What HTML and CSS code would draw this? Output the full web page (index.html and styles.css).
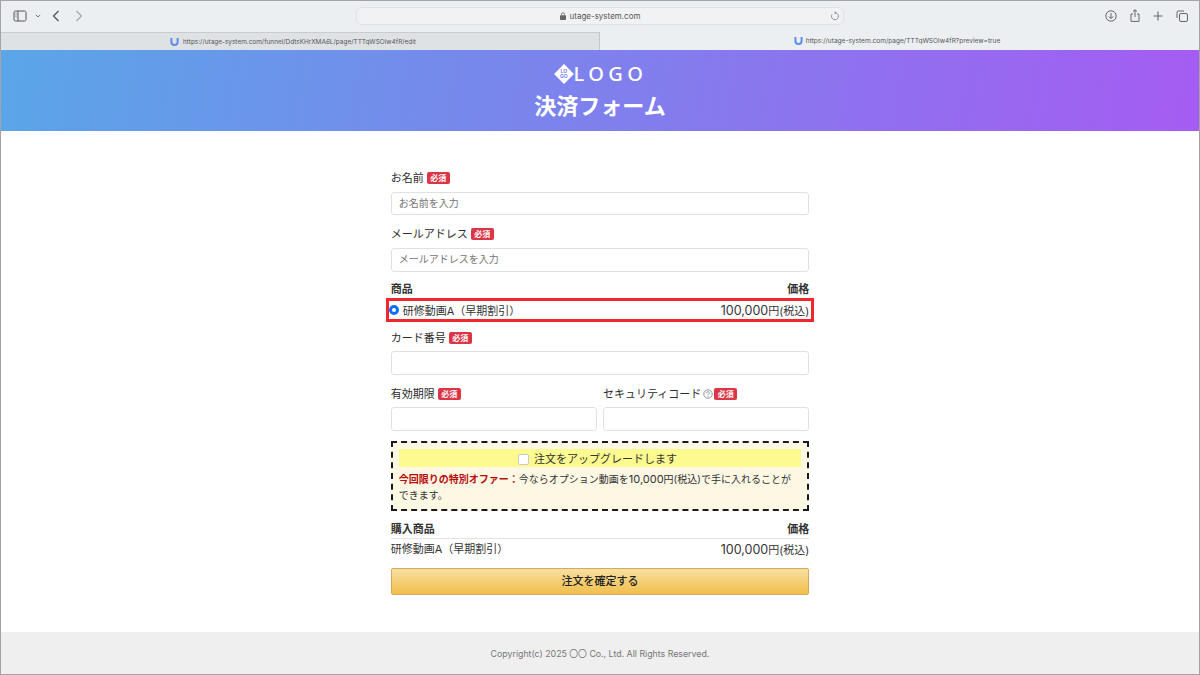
FILE: index.html
```html
<!DOCTYPE html>
<html lang="ja">
<head>
<meta charset="utf-8">
<title>決済フォーム</title>
<link rel="stylesheet" href="styles.css">
</head>
<body>
<div class="window">
  <div class="toolbar">
    <div class="tb-left">
      <svg class="ic sidebar" viewBox="0 0 14 12" width="14" height="12"><rect x="1" y="1" width="12" height="10" rx="1.5" fill="none" stroke="#555" stroke-width="1"/><path d="M5 1v10" stroke="#555"/><path d="M2.3 3.2h1.5M2.3 5h1.5M2.3 6.8h1.5" stroke="#777" stroke-width=".8"/></svg>
      <svg class="ic chev" viewBox="0 0 6 4" width="6" height="4"><path d="M.8.8 3 3l2.2-2.2" fill="none" stroke="#777" stroke-width="1"/></svg>
      <svg class="ic back" viewBox="0 0 8 12" width="8" height="12"><path d="M6.5 1 1.5 6l5 5" fill="none" stroke="#555" stroke-width="1.3"/></svg>
      <svg class="ic fwd" viewBox="0 0 8 12" width="8" height="12"><path d="M1.5 1l5 5-5 5" fill="none" stroke="#aaa" stroke-width="1.3"/></svg>
    </div>
    <div class="address">
      <span class="addr-text">
        <svg viewBox="0 0 6 8" width="6" height="8"><path d="M1.5 3.5V2.3a1.5 1.5 0 0 1 3 0v1.2" fill="none" stroke="#666" stroke-width=".8"/><rect y="3.3" width="6" height="4.7" rx=".8" fill="#666"/></svg>
        utage-system.com
      </span>
      <svg class="reload" viewBox="0 0 10 10" width="10" height="10"><path d="M5.6 1.8A3.5 3.5 0 1 1 2 3.4" fill="none" stroke="#888" stroke-width=".9"/><path d="M4.6.2 6.6 1.8 4.6 3.2z" fill="#888"/></svg>
    </div>
    <div class="tb-right">
      <svg viewBox="0 0 12 12" width="12" height="12"><circle cx="6" cy="6" r="5.2" fill="none" stroke="#666"/><path d="M6 3v5.4M3.8 6.4 6 8.6l2.2-2.2" fill="none" stroke="#666"/></svg>
      <svg viewBox="0 0 10 13" width="10" height="13"><path d="M3 5H1v7.4h8V5H7" fill="none" stroke="#666"/><path d="M5 8V.8M3 2.6 5 .7l2 1.9" fill="none" stroke="#666"/></svg>
      <svg viewBox="0 0 10 10" width="10" height="10"><path d="M5 .5v9M.5 5h9" stroke="#666" stroke-width="1.1"/></svg>
      <svg viewBox="0 0 12 12" width="12" height="12"><rect x="3.5" y="3.5" width="8" height="8" rx="1.5" fill="none" stroke="#666"/><path d="M1 8V2a1.2 1.2 0 0 1 1-1h6" fill="none" stroke="#666"/></svg>
    </div>
  </div>
  <div class="tabs">
    <div class="tab tab-off">
      <svg class="fav" viewBox="0 0 9 10" width="9" height="10"><path d="M1.4 1v4a3.1 3.1 0 0 0 6.2 0V1" fill="none" stroke="#5f8ee8" stroke-width="2"/></svg>
      <span>https://utage-system.com/funnel/DdtsKHrXMA6L/page/TTTqWSOlw4fR/edit</span>
    </div>
    <div class="tab tab-on">
      <svg class="fav" viewBox="0 0 9 10" width="9" height="10"><path d="M1.4 1v4a3.1 3.1 0 0 0 6.2 0V1" fill="none" stroke="#5f8ee8" stroke-width="2"/></svg>
      <span>https://utage-system.com/page/TTTqWSOlw4fR?preview=true</span>
    </div>
  </div>

  <header class="hero">
    <div class="logo">
      <span class="diamond"><span class="diamond-text">LO<br>GO</span></span>
      <span class="logo-text">LOGO</span>
    </div>
    <h1 class="title">決済フォーム</h1>
  </header>

  <main class="main">
    <form class="form">
      <div class="label lb-first">お名前 <span class="req">必須</span></div>
      <div class="input ph">お名前を入力</div>
      <div class="label lb-mail">メールアドレス <span class="req">必須</span></div>
      <div class="input ph">メールアドレスを入力</div>

      <div class="thead th-prod"><span>商品</span><span>価格</span></div>
      <div class="selected">
        <span class="sel-name"><span class="radio"></span>研修動画A（早期割引）</span>
        <span><span class="num">100,000</span>円(税込)</span>
      </div>

      <div class="label lb-card">カード番号 <span class="req">必須</span></div>
      <div class="input"></div>

      <div class="cols">
        <div class="col">
          <div class="label">有効期限 <span class="req">必須</span></div>
          <div class="input"></div>
        </div>
        <div class="col">
          <div class="label">セキュリティコード<svg class="help" viewBox="0 0 10 10" width="10" height="10"><circle cx="5" cy="5" r="4.2" fill="none" stroke="#777" stroke-width=".8"/><path d="M3.7 4a1.3 1.3 0 1 1 1.9 1.1c-.4.2-.6.5-.6 1" fill="none" stroke="#777" stroke-width=".8"/><circle cx="5" cy="7.5" r=".5" fill="#777"/></svg> <span class="req">必須</span></div>
          <div class="input"></div>
        </div>
      </div>

      <div class="upsell">
        <div class="upsell-head"><span class="check"></span>注文をアップグレードします</div>
        <p class="upsell-body"><strong>今回限りの特別オファー：</strong>今ならオプション動画を<span class="num-sm">10,000</span>円(税込)で手に入れることが<br>できます。</p>
      </div>

      <div class="thead th-buy"><span>購入商品</span><span>価格</span></div>
      <div class="row"><span>研修動画A（早期割引）</span><span><span class="num">100,000</span>円(税込)</span></div>
      <div class="submit">注文を確定する</div>
    </form>
  </main>

  <footer class="footer">Copyright(c) 2025 〇〇 Co., Ltd. All Rights Reserved.</footer>
</div>
</body>
</html>
```

FILE: styles.css
```css
* { box-sizing: border-box; }
html, body { margin: 0; height: 100%; }
body {
  width: 1200px;
  height: 675px;
  overflow: hidden;
  background: #fff;
  font-family: Inter, "Noto Sans CJK JP", sans-serif;
  color: #333;
}
.window {
  width: 1200px;
  height: 675px;
  border: 1px solid #a3a3a3;
  display: flex;
  flex-direction: column;
  overflow: hidden;
}
.toolbar {
  height: 31px;
  flex: none;
  background: #eceff2;
  display: flex;
  align-items: center;
  position: relative;
  padding: 0 0 2px 0;
}
.tb-left {
  width: 355px;
  flex: none;
  display: flex;
  align-items: center;
  padding-left: 12px;
}
.chev { margin-left: 8px; }
.back { margin-left: 11px; }
.fwd { margin-left: 15px; }
.address {
  width: 488px;
  height: 18px;
  flex: none;
  border: 1px solid #dfe2e5;
  border-radius: 6px;
  background: #f0f2f4;
  display: flex;
  align-items: center;
  justify-content: center;
  position: relative;
  font-size: 8px;
  color: #555;
}
.addr-text { display: inline-flex; align-items: center; gap: 4px; }
.reload { position: absolute; right: 3px; top: 3px; }
.tb-right {
  flex: 1;
  display: flex;
  align-items: center;
  justify-content: flex-end;
  gap: 13px;
  padding-right: 11px;
}
.tabs {
  height: 18px;
  flex: none;
  display: flex;
  font-size: 6.45px;
  color: #555;
}
.tab {
  display: flex;
  align-items: center;
  justify-content: center;
  gap: 4px;
}
.tab-off {
  width: 599px;
  padding-right: 14px;
  background: #dfe2e5;
  border-top: 1px solid #c9cccf;
  border-right: 1px solid #c4c7ca;
}
.tab-on { flex: 1; padding-right: 5px; gap: 3px; font-size: 6.55px; background: #eceff2; }
.hero {
  height: 81px;
  flex: none;
  background: linear-gradient(100deg, #5aa6e8 0%, #7b84ec 45%, #a55cf2 100%);
  color: #fff;
  display: flex;
  flex-direction: column;
  align-items: center;
  padding-top: 12px;
}
.logo { display: flex; align-items: center; height: 24px; }
.diamond {
  width: 14px;
  height: 14px;
  margin-right: 3px;
  background: #fff;
  transform: rotate(45deg);
  display: flex;
  align-items: center;
  justify-content: center;
}
.diamond-text {
  transform: rotate(-45deg);
  font-size: 5px;
  line-height: 5px;
  font-weight: 700;
  color: #7b84ec;
  text-align: center;
}
.logo-text {
  font-family: "Noto Sans", sans-serif;
  font-size: 20px;
  line-height: 24px;
  letter-spacing: 4.4px;
  font-weight: 500;
  margin-right: -4px;
}
.title {
  margin: 3px 0 0;
  font-family: "Noto Sans CJK JP", sans-serif;
  font-size: 22px;
  line-height: 30px;
  font-weight: 700;
}
.main {
  flex: 1;
  display: flex;
  justify-content: center;
  background: #fff;
}
.form {
  width: 418.5px;
  font-size: 11px;
  display: flex;
  flex-direction: column;
}
.label {
  height: 16px;
  line-height: 16px;
  padding-top: 2px;
  font-size: 11px;
  color: #2b2b2b;
  display: flex;
  align-items: center;
  white-space: pre;
}
.lb-first { margin-top: 38px; margin-bottom: 6.5px; }
.lb-mail { margin-top: 10px; margin-bottom: 7px; }
.lb-card { margin-top: 7px; margin-bottom: 6px; }
.req {
  display: inline-block;
  width: 23px;
  height: 12px;
  line-height: 12px;
  border-radius: 2px;
  background: #dc3545;
  color: #fff;
  font-size: 8px;
  font-weight: 700;
  text-align: center;
}
.help { margin-left: 2px; margin-right: 1px; }
.input {
  height: 23.5px;
  line-height: 21.5px;
  border: 1px solid #dee2e6;
  border-radius: 3px;
  background: #fff;
  padding: 0 7px;
  flex: none;
}
.ph { color: #757575; font-size: 10px; }
.th-prod { margin-top: 10.5px; }
.thead {
  display: flex;
  justify-content: space-between;
  font-weight: 700;
  height: 15px;
  line-height: 15px;
  color: #333;
}
.selected {
  margin: 1px -5px 0;
  height: 24px;
  border: 3px solid #f0282d;
  padding: 0 2px 0 0;
  display: flex;
  align-items: center;
  justify-content: space-between;
  font-size: 11px;
}
.num { font-size: 12.5px; }
.num-sm { font-size: 11px; }
.sel-name { display: flex; align-items: center; }
.radio {
  width: 10px;
  height: 10px;
  border-radius: 50%;
  background: #fff;
  border: 3px solid #0d6efd;
  margin-right: 4px;
}
.cols { display: flex; gap: 6px; margin-top: 10px; }
.col { flex: 1; display: flex; flex-direction: column; gap: 6.5px; min-width: 0; }
.upsell {
  margin-top: 10px;
  height: 70px;
  border: 2px dashed #1a1a1a;
  background: #fdf8e4;
  padding: 6px 6px 0;
}
.upsell-head {
  height: 18px;
  padding-right: 5px;
  background: #fdfa8f;
  display: flex;
  align-items: center;
  justify-content: center;
  font-size: 11px;
}
.check {
  width: 11px;
  height: 11px;
  margin-right: 5px;
  margin-top: 4px;
  background: #fff;
  border: 1px solid #c9c9c9;
  border-radius: 2px;
}
.upsell-body {
  margin: 4px 0 0;
  font-size: 10px;
  line-height: 16px;
}
.upsell-body strong { color: #b80c0c; }
.th-buy {
  margin-top: 10.5px;
  height: 18px;
  line-height: 17px;
  border-bottom: 1px solid #e3e3e3;
}
.row {
  height: 21px;
  line-height: 21px;
  display: flex;
  justify-content: space-between;
  font-size: 11px;
}
.submit {
  margin-top: 7.5px;
  height: 27px;
  line-height: 25px;
  text-align: center;
  font-size: 11px;
  font-weight: 500;
  color: #222;
  border: 1px solid #d3ab5c;
  border-radius: 2px;
  background: linear-gradient(#f8dfa0, #f0bf4c);
}
.footer {
  height: 42px;
  flex: none;
  background: #efefef;
  color: #777;
  font-size: 8.8px;
  line-height: 43px;
  text-align: center;
}
```
